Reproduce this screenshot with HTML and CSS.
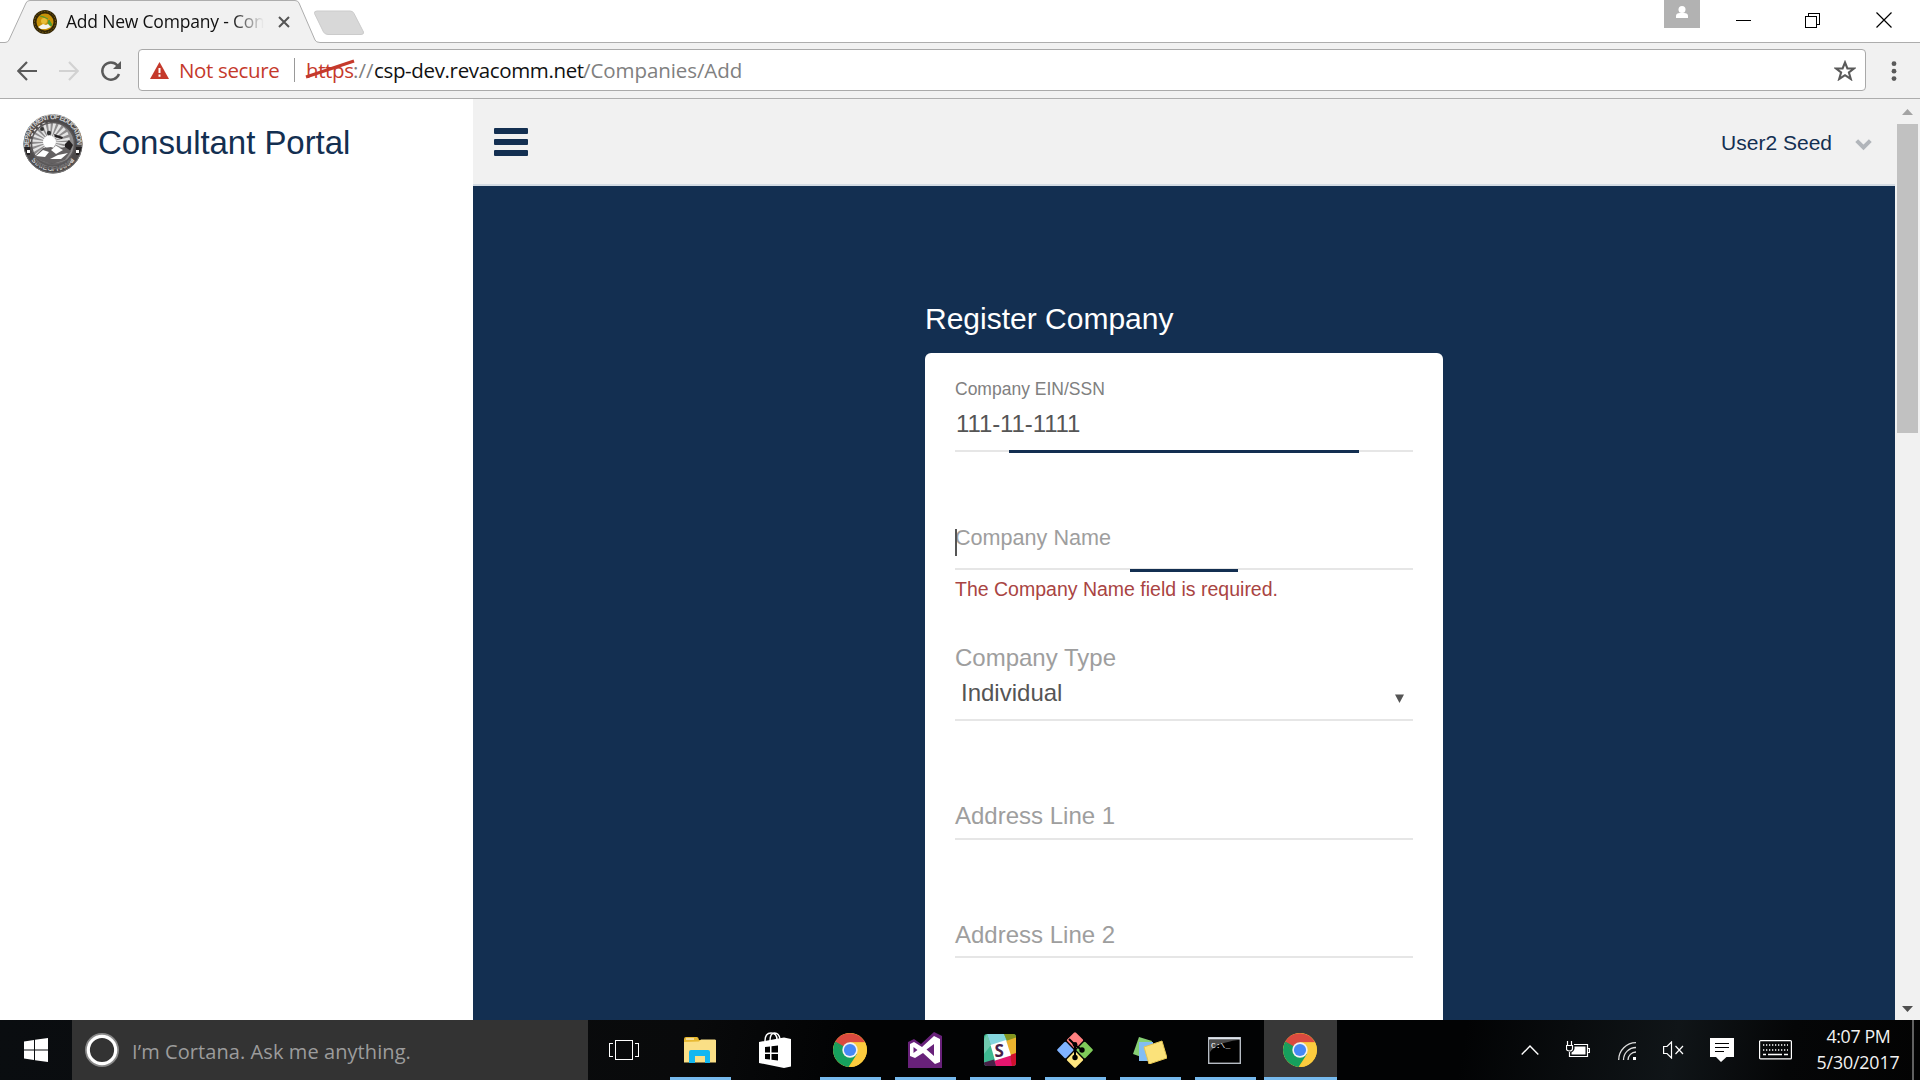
FILE: index.html
```html
<!DOCTYPE html>
<html lang="en">
<head>
<meta charset="utf-8">
<title>Add New Company - Consultant Portal</title>
<link rel="stylesheet" href="styles.css">
</head>
<body>
<svg class="defs" width="0" height="0" aria-hidden="true">
  <symbol id="chrome" viewBox="0 0 34 34">
    <circle cx="17" cy="17" r="17" fill="#fcc934"/>
    <path d="M17 17 2.3 8.500A17 17 0 0 0 15.500 33.900L24 21Z" fill="#16a05d"/>
    <path d="M2.300 8.500A17 17 0 0 1 32 9.300L17 9.300 10.300 21Z" fill="#db4a3f"/>
    <path d="M2.300 8.500 10 21 17 17Z" fill="#16a05d"/>
    <path d="M24 21 17.500 33.990A17 17 0 0 0 32.200 9.500H17Z" fill="#fccb3e"/>
    <circle cx="17" cy="17" r="7.700" fill="#f1f1f1"/>
    <circle cx="17" cy="17" r="6.100" fill="#4688f4"/>
  </symbol>
</svg>

<div class="tabstrip">
  <svg class="tab-shape" width="1920" height="43">
    <path d="M0 42.500H5Q8 42.500 9 40L26 3Q27 .5 30 .5H295Q298 .5 299 3L315 40Q316 42.500 320 42.500H1920V44H0Z" fill="#f1f1f1" stroke="#adadad"/>
    <path d="M317 11H350Q353 11 354 13.500L363.500 32Q364 34.500 361 34.500H328Q325 34.500 323.500 32L314.500 13.500Q314 11 317 11Z" fill="#d8d8d8" stroke="#cbcbcb"/>
  </svg>
  <svg class="favicon" width="24" height="24" viewBox="0 0 24 24">
    <circle cx="12" cy="12" r="12" fill="#332606"/>
    <circle cx="12" cy="12" r="10.500" fill="none" stroke="#7d6210" stroke-dasharray="1.500 1.500"/>
    <circle cx="12" cy="12" r="8.500" fill="#c89208"/>
    <circle cx="11" cy="11" r="3" fill="#e8bd35"/>
    <path d="M7 6l4 1 4 2M16 10l3 5-2 1-2-3Z" fill="#4a9a35" stroke="#4a9a35"/>
    <path d="M5 17l5-3 3 1 2-1 3 3-5 2H8Z" fill="#f4f4ec"/>
  </svg>
  <div class="tab-title">Add New Company - Consultant Portal</div>
  <svg class="tab-close" width="12" height="12" viewBox="0 0 12 12"><path d="M1 1l10 10M11 1 1 11" stroke="#555" stroke-width="2"/></svg>
  <div class="window-buttons">
    <svg class="profile" width="36" height="28"><rect width="36" height="28" fill="#b2b2b2"/><circle cx="18" cy="9.500" r="3.500" fill="#fff"/><path d="M12 18v-2q0-3 4-3h4q4 0 4 3v2Z" fill="#fff"/></svg>
    <svg class="minimise" width="15" height="15" shape-rendering="crispEdges"><path d="M0 7.500h15" stroke="#000"/></svg>
    <svg class="restore" width="15" height="15" shape-rendering="crispEdges"><path d="M.5 3.500h11v11H.5ZM3.500 3V.5h11v11H12" fill="none" stroke="#000"/></svg>
    <svg class="close" width="16" height="16"><path d="M.5 .5l15 15M15.500 .5l-15 15" stroke="#000" stroke-width="1.200"/></svg>
  </div>
</div>

<div class="toolbar">
  <svg class="nav-icon" width="20" height="20" viewBox="0 0 20 20"><path d="M20 10H1.500M10 1 1.300 10 10 19" fill="none" stroke="#5a5a5a" stroke-width="2.200"/></svg>
  <svg class="nav-icon forward" width="20" height="20" viewBox="0 0 20 20"><path d="M0 10h18.500M10 1l8.700 9L10 19" fill="none" stroke="#d2d2d2" stroke-width="2.200"/></svg>
  <svg class="nav-icon reload" width="22" height="22" viewBox="0 0 22 22"><path d="M17.500 5.500A8.600 8.600 0 1 0 19 14" fill="none" stroke="#5a5a5a" stroke-width="2.400"/><path d="M21 1v8h-8Z" fill="#5a5a5a"/></svg>
  <div class="omnibox">
    <svg class="warning" width="19" height="17" viewBox="0 0 19 17"><path d="M9.500 0 19 17H0Z" fill="#c5392b"/><path d="M9.500 6v5M9.500 12.500v2.200" stroke="#fff" stroke-width="2"/></svg>
    <span class="not-secure">Not secure</span>
    <span class="separator"></span>
    <span class="scheme">https<svg class="strike" width="50" height="20"><path d="M1 18 49 2" stroke="#c5392b" stroke-width="3.200"/></svg></span><span class="slashes">://</span><span class="domain">csp-dev.revacomm.net</span><span class="path">/Companies/Add</span>
    <svg class="star" width="22" height="21" viewBox="0 0 22 21"><path d="M11 2.500l2.400 6H20l-5.100 4 1.900 6.500L11 15.200 5.200 19l1.900-6.500L2 8.500h6.600Z" fill="none" stroke="#5a5a5a" stroke-width="2.100"/></svg>
  </div>
  <svg class="menu" width="6" height="20"><circle cx="3" cy="2.700" r="2.400" fill="#5a5a5a"/><circle cx="3" cy="10.200" r="2.400" fill="#5a5a5a"/><circle cx="3" cy="17.600" r="2.400" fill="#5a5a5a"/></svg>
</div>

<div class="viewport">
  <aside class="sidebar">
    <svg class="seal" width="60" height="60" viewBox="0 0 60 60">
      <defs>
        <path id="ring-top" d="M6.500 34A24 24 0 1 1 53.500 34"/>
        <path id="ring-bottom" d="M5.500 42A27.500 27.500 0 0 0 54.500 42"/>
      </defs>
      <circle cx="30" cy="30" r="29.500" fill="#4d4a4b"/>
      <circle cx="30" cy="30" r="29" fill="none" stroke="#777" stroke-width="1"/>
      <text class="seal-text"><textPath href="#ring-top" textLength="82">DEPARTMENT OF EDUCATION</textPath></text>
      <text class="seal-text"><textPath href="#ring-bottom" startOffset="5" textLength="50">STATE OF HAWAII</textPath></text>
      <circle cx="30" cy="30" r="21.500" fill="#8f8d8e"/>
      <circle cx="27" cy="28" r="13" fill="none" stroke="#e4e4e4" stroke-width="14" stroke-dasharray="2 1.712"/>
      <circle cx="30" cy="30" r="21.500" fill="none" stroke="#5a5758" stroke-width="1.500"/>
      <circle cx="26.500" cy="28" r="6.500" fill="#fff"/>
      <circle cx="19" cy="15" r="2" fill="#333"/><circle cx="26" cy="19" r="2.200" fill="#333"/>
      <path d="M31 20l9 3-1 2-7-2ZM42 30l4-4 4 5-3 6-5-1Z" fill="#242122"/>
      <path d="M11 43l9-9 8-1 5 2 9-2 6 4-6 9-13 4-10-3Z" fill="#646162"/>
      <path d="M13 42l7-6 6 2-4 5ZM28 36l5-4 7 4-7 4ZM27 45l8-4 10-2-7 6Z" fill="#fff"/>
      <path d="M11 43q19 12 38 0l-3 8q-16 9-32 0Z" fill="#5b5859" opacity=".75"/>
      <path d="M1 33h6v8H4ZM53 33h6l-3 8h-3Z" fill="#252223"/><path d="M4 36h3v3H4ZM53 36h3v3h-3Z" fill="#fff"/>
    </svg>
    <span class="brand">Consultant Portal</span>
  </aside>
  <main class="main">
    <header class="header">
      <div class="hamburger"><i></i><i></i><i></i></div>
      <span class="user">User2 Seed</span>
      <svg class="chevron" width="17" height="12"><path d="M1.700 1.700 8.500 8.500l6.800-6.800" fill="none" stroke="#b1b5ba" stroke-width="4"/></svg>
    </header>
    <section class="content">
      <h1 class="title">Register Company</h1>
      <form class="card">
        <div class="field ein">
          <label class="label-small">Company EIN/SSN</label>
          <span class="value">111-11-1111</span>
          <b class="focus-bar"></b>
        </div>
        <div class="field name">
          <label class="label-moving">Company Name</label>
          <b class="caret"></b>
          <b class="focus-bar"></b>
        </div>
        <div class="field type">
          <span class="error">The Company Name field is required.</span>
          <label class="label">Company Type</label>
          <div class="select"><span>Individual</span><svg width="9" height="9"><path d="M0 .5h9L4.500 9Z" fill="#555"/></svg></div>
        </div>
        <div class="field address1"><label class="label">Address Line 1</label></div>
        <div class="field address2"><label class="label">Address Line 2</label></div>
      </form>
    </section>
  </main>
  <div class="scrollbar">
    <svg width="11" height="6"><path d="M0 6 5.500 0 11 6Z" fill="#a3a3a3"/></svg>
    <div class="thumb"></div>
    <svg class="down" width="11" height="6"><path d="M0 0h11L5.500 6Z" fill="#505050"/></svg>
  </div>
</div>

<div class="taskbar">
  <div class="start">
    <svg width="24" height="24" viewBox="0 0 24 24"><path d="M0 3.400 10 2v9.500H0ZM11 1.800 24 0v11.500H11ZM0 12.500h10V22L0 20.600ZM11 12.500h13V24l-13-1.800Z" fill="#fff"/></svg>
  </div>
  <div class="search">
    <svg width="34" height="34"><circle cx="17" cy="17" r="16" fill="none" stroke="#888" stroke-width="2"/><circle cx="17" cy="17" r="13.700" fill="none" stroke="#fff" stroke-width="3.200"/></svg>
    <span>I’m Cortana. Ask me anything.</span>
  </div>
  <div class="apps">
    <div class="app task-view"><svg width="30" height="20" shape-rendering="crispEdges"><path d="M6.500 .5h17v19h-17ZM4 3.500H.5v13H4M26 3.500h3.500v13H26" fill="none" stroke="#fff"/></svg></div>
    <div class="app open"><svg width="32" height="27" viewBox="0 0 32 27">
      <path d="M0 2Q0 0 2 0H13Q14.500 0 15 3H32V25H0Z" fill="#e8b932"/><path d="M2 2h8" stroke="#fff"/><path d="M0 5 15 4.500 17 2.500H31Q32 2.500 32 4V25.500H0Z" fill="#fadf86"/>
      <path d="M5 26V15Q5 13 7 13H24Q26 13 26 15V26H21V19H11V26Z" fill="#14b7f0"/></svg></div>
    <div class="app"><svg width="32" height="36" viewBox="0 0 32 36">
      <path d="M6 9Q6 1 12 1t6 7M11 9Q11 1 15.500 1T21 7" fill="none" stroke="#fff" stroke-width="1.500"/><path d="M0 10 25 5.500 32 7V34.500L25 36 0 31Z" fill="#fff"/>
      <path d="M6 15l5-.5v6H6ZM12.500 14.300 19 13.500v7h-6.500ZM6 22h5v5.500L6 27ZM12.500 22H19v6.500l-6.500-.8Z" fill="#000"/></svg></div>
    <div class="app open"><svg width="34" height="34"><use href="#chrome"/></svg></div>
    <div class="app open"><svg width="34" height="36" viewBox="0 0 34 36">
      <path d="M0 10 6 7l7 5L26 0l8 4V36H0Z" fill="#68217a"/><path fill-rule="evenodd" d="M2 12l4-2 8 5L26 4l6 3V30l-5 2-12-11-8 5-5-2ZM5.500 15v6l4-3ZM26 12l-7.500 5.500L26 24Z" fill="#fff"/></svg></div>
    <div class="app open"><svg width="32" height="32" viewBox="0 0 32 32">
      <defs><clipPath id="slack-clip"><rect width="32" height="32" rx="3"/></clipPath></defs>
      <g clip-path="url(#slack-clip)"><path d="M0 0h32v32H0Z" fill="#3eb991"/><path d="M3 0H20l3 7L7 12Z" fill="#85d6de"/><path d="M20 0H32v4L23 7Z" fill="#84951f"/><path d="M22 7 32 3.500V20l-6 2Z" fill="#ecb32d"/><path d="M10 27 26 21l3 11H12Z" fill="#e5156f"/><path d="M26 21l6-2V32h-4Z" fill="#d0102e"/><path d="M0 28.500l10-3 2 6.500H0Z" fill="#472048"/><path d="M0 5l3-5 4 11-7 9Z" fill="#6fc9ae"/><path d="M6.500 11 22 6l5 15.500-16 5Z" fill="#fff"/></g>
      <text class="slack-letter" x="10.500" y="22.500">S</text></svg></div>
    <div class="app open"><svg width="36" height="36" viewBox="0 0 36 36">
      <g transform="translate(18 18) rotate(45)"><rect x="-13" y="-13" width="12.300" height="12.300" rx="1.500" fill="#ff8080"/><rect x=".7" y="-13" width="12.300" height="12.300" rx="1.500" fill="#7fcb5a"/><rect x="-13" y=".7" width="12.300" height="12.300" rx="1.500" fill="#80b3ff"/><rect x=".7" y=".7" width="12.300" height="12.300" rx="1.500" fill="#ffe680"/></g>
      <path d="M12 7l6 6V26M18 13l7 5" fill="none" stroke="#000" stroke-width="2"/><circle cx="18" cy="12.500" r="2.400" fill="#000"/><circle cx="18" cy="25.500" r="2.700" fill="#000"/><circle cx="25" cy="18" r="2.700" fill="#000"/></svg></div>
    <div class="app open"><svg width="34" height="27" viewBox="0 0 34 27">
      <path d="M6 0 19 4l-5 18L0 17Z" fill="#86cf74"/><path d="M6 5H20V24H6Z" fill="#82bdf3"/><path d="M11 10 29 4l5 17-18 6Z" fill="#fbe27a" stroke="#e5c552"/></svg></div>
    <div class="app open"><svg width="33" height="27" viewBox="0 0 33 27">
      <rect x=".7" y=".7" width="31.600" height="25.600" fill="#000" stroke="#b6bcc4" stroke-width="1.400"/><path d="M1 1.500h31" stroke="#dfe5ec" stroke-width="2"/><path d="M2 3h28Q8 6 2 15Z" fill="#4a4a4a"/><text class="cmd-text" x="3" y="10.500">C:\_</text></svg></div>
    <div class="app open active"><svg width="34" height="34"><use href="#chrome"/></svg></div>
  </div>
  <div class="tray">
    <svg class="t-caret" width="18" height="10"><path d="M.7 9.500 9 1l8.300 8.500" fill="none" stroke="#fff" stroke-width="1.400"/></svg>
    <svg class="t-battery" width="24" height="18" viewBox="0 0 24 18"><path d="M8 3.500H21.500V15.500H3.500V11M22 7.500h1.500v4H22M1.500 0V4M5.500 0V4M.5 4.500h6v3Q6.500 10 3.500 10T.5 7.500Z" fill="none" stroke="#fff" stroke-width="1.200"/><path d="M8.500 5.500h11v8h-14v-2Q8 10 8.500 8Z" fill="#fff"/></svg>
    <svg class="t-wifi" width="18" height="18" viewBox="0 0 18 18"><path d="M.7 18A17.300 17.300 0 0 1 18 .7M5.500 18A12.500 12.500 0 0 1 18 5.500M10 18a8 8 0 0 1 8-8" fill="none" stroke="#ddd" stroke-width="1.300"/><path d="M15 15h3v3h-3Z" fill="#fff"/></svg>
    <svg class="t-volume" width="21" height="18" viewBox="0 0 21 18"><path d="M.6 5.500H4L8.500 1v16L4 12.500H.6ZM12.500 5l7.500 8M20 5l-7.500 8" fill="none" stroke="#fff" stroke-width="1.200"/></svg>
    <svg class="t-action" width="24" height="24"><path d="M0 0h24v19h-7.500L11 24 6 19H0Z" fill="#fff"/><path d="M5 5.500h14M5 9.500h14M5 13.500h9" stroke="#000" stroke-width="1.200"/></svg>
    <svg class="t-keyboard" width="33" height="20"><rect x=".6" y=".6" width="31.800" height="18.300" rx="1" fill="none" stroke="#fff" stroke-width="1.200"/><path d="M4 5h25M4 10h25" stroke="#fff" stroke-width="1.300" stroke-dasharray="1.300 1.700"/><path d="M4 14.500h3M9 14.500h14M25 14.500h4" stroke="#fff" stroke-width="1.300"/></svg>
    <div class="clock"><span class="time">4:07 PM</span><span class="date">5/30/2017</span></div>
    <div class="show-desktop"></div>
  </div>
</div>
</body>
</html>
```
FILE: styles.css
```css
* { box-sizing: border-box; }
body {
  margin: 0;
  width: 1920px;
  height: 1080px;
  overflow: hidden;
  display: flex;
  flex-direction: column;
  font-family: "Liberation Sans", Arial, sans-serif;
  background: #fff;
}
svg { display: block; flex: none; }
.defs { position: absolute; }

/* browser chrome */
.tabstrip, .toolbar, .taskbar { font-family: "Open Sans", "Noto Sans", sans-serif; }
.tabstrip {
  position: relative;
  height: 43px;
  flex: none;
  display: flex;
  align-items: flex-start;
}
.tab-shape { position: absolute; left: 0; top: 0; }
.favicon { margin: 10px 0 0 33px; position: relative; }
.tab-title {
  position: relative;
  margin: 8px 0 0 9px;
  width: 198px;
  height: 26px;
  line-height: 26px;
  overflow: hidden;
  white-space: nowrap;
  font-size: 17.500px;
  letter-spacing: -0.2px;
  color: #111;
  -webkit-mask-image: linear-gradient(to right, #000 166px, transparent 198px);
  mask-image: linear-gradient(to right, #000 166px, transparent 198px);
}
.tab-close { position: relative; margin: 16px 0 0 14px; }
.window-buttons { position: relative; display: flex; margin-left: auto; padding-right: 28px; }
.minimise { margin: 13px 0 0 36px; }
.restore { margin: 13px 0 0 54px; }
.close { margin: 12px 0 0 56px; }

.toolbar {
  height: 56px;
  flex: none;
  display: flex;
  align-items: center;
  background: #f1f1f1;
  border-bottom: 1px solid #adadad;
  padding-left: 17px;
}
.forward { margin-left: 22px; }
.reload { margin-left: 21px; }
.omnibox {
  display: flex;
  align-items: center;
  width: 1728px;
  height: 42px;
  margin-left: 16px;
  margin-bottom: 1px;
  padding-left: 11px;
  border: 1px solid #a9a9a9;
  border-radius: 4px;
  background: #fff;
  font-size: 20.500px;
  line-height: 40px;
  color: #808080;
  white-space: nowrap;
}
.not-secure { width: 99px; margin-left: 10px; color: #c5392b; letter-spacing: -0.35px; }
.separator { width: 1px; height: 24px; margin: 0 11px 0 16px; background: #999; }
.scheme { position: relative; width: 47px; color: #c5392b; letter-spacing: -0.4px; }
.strike { position: absolute; left: -1px; top: 9px; }
.slashes { width: 21px; }
.domain { width: 209px; color: #111; letter-spacing: -0.35px; }
.path { letter-spacing: -0.08px; }
.star { margin: 0 9px 0 auto; }
.menu { margin-left: 25px; }

/* page */
.viewport { display: flex; height: 921px; flex: none; }
.sidebar { width: 473px; display: flex; align-items: flex-start; padding: 15px 0 0 23px; }
.seal-text { font-size: 7px; font-weight: bold; fill: #d0d0d0; }
.brand { margin: 9px 0 0 15px; font-size: 33px; line-height: 40px; color: #132f51; white-space: nowrap; letter-spacing: -0.05px; }
.main { width: 1422px; display: flex; flex-direction: column; background: #132f51; }
.header {
  height: 87px;
  flex: none;
  display: flex;
  align-items: flex-start;
  background: #f1f1f1;
  border-bottom: 2px solid #d3dbe3;
  padding: 29px 23px 0 21px;
}
.hamburger { display: flex; flex-direction: column; gap: 5px; width: 34px; }
.hamburger i { height: 6px; border-radius: 1px; background: #132f51; }
.user { margin-left: auto; font-size: 21px; line-height: 30px; color: #132f51; }
.chevron { margin: 11px 0 0 23px; }
.content { flex: 1; min-height: 0; overflow: hidden; display: flex; flex-direction: column; padding: 113px 0 0 452px; }
.title { margin: 0 0 14px; font-size: 30px; line-height: 40px; font-weight: 400; color: #fff; }
.card { width: 518px; flex: 1; padding: 0 30px; border-radius: 6px 6px 0 0; background: #fff; }
.field { position: relative; display: flex; flex-direction: column; border-bottom: 2px solid #e6e6e6; color: #9e9e9e; font-size: 24px; line-height: 30px; }
.ein { height: 99px; padding-top: 24px; }
.label-small { font-size: 17.500px; line-height: 24px; color: #808080; }
.value { margin: 8px 0 0 1px; color: #555; letter-spacing: -0.1px; }
.name { height: 118px; padding-top: 70.500px; }
.label-moving { font-size: 21.600px; }
.type { height: 151px; padding-top: 6px; }
.error { font-size: 19.500px; line-height: 26px; margin-bottom: 41px; color: #a94442; }
.select { display: flex; justify-content: space-between; align-items: center; margin-top: 5px; padding: 0 9px 0 6px; color: #555; }
.select svg { margin-top: 10px; }
.address1 { height: 119px; padding-top: 80px; }
.address2 { height: 118px; padding-top: 80px; }
.focus-bar { position: absolute; height: 3px; background: #132f51; }
.ein .focus-bar { left: 54px; width: 350px; bottom: -3px; }
.name .focus-bar { left: 175px; width: 108px; bottom: -4px; }
.caret { position: absolute; left: 0; top: 77px; width: 2px; height: 27px; background: #555; }
.scrollbar { width: 25px; display: flex; flex-direction: column; align-items: center; padding: 10px 0 8px; background: #f1f1f1; }
.thumb { width: 21px; height: 309px; margin-top: 9px; background: #c1c1c1; }
.down { margin-top: auto; }

/* taskbar */
.taskbar {
  display: flex;
  height: 60px;
  flex: none;
  color: #f2f2f2;
  background: linear-gradient(100deg, #0a0d10 0, #090a0b 36%, #020304 44%, #020304 76%, #101518 87%, #050607 93%, #030303 100%);
}
.start { width: 72px; padding: 18px 24px; }
.search { width: 516px; display: flex; align-items: center; gap: 13px; padding-left: 13px; background: #333; }
.search span { font-size: 20px; line-height: 30px; margin-top: 3px; letter-spacing: 0.08px; color: #9c9c9c; white-space: nowrap; }
.apps { display: flex; }
.app { position: relative; width: 75px; display: flex; align-items: center; justify-content: center; padding-right: 2px; }
.task-view { padding-right: 3px; }
.open::after { content: ""; position: absolute; left: 7px; right: 7px; bottom: 0; height: 3px; background: #76b9ed; }
.active { width: 73px; margin-left: 1px; background: #383838; }
.active::after { left: 0; right: 0; }
.tray { display: flex; align-items: center; margin-left: auto; }
.t-battery { margin-left: 27px; }
.t-wifi { margin-left: 28px; margin-top: 2px; }
.t-volume { margin-left: 27px; }
.t-action { margin-left: 26px; }
.t-keyboard { margin-left: 25px; }
.clock { width: 110px; margin: -2px -1px 0 11px; display: flex; flex-direction: column; align-items: center; font-size: 17.800px; line-height: 26px; letter-spacing: -0.15px; }
.time { letter-spacing: -0.35px; padding-left: 1px; }
.show-desktop { width: 8px; height: 60px; border-left: 2px solid #606060; }
.slack-letter { font: bold 17px "Open Sans", sans-serif; fill: #472048; }
.cmd-text { font: 8px "Liberation Mono", monospace; fill: #fff; }
```
